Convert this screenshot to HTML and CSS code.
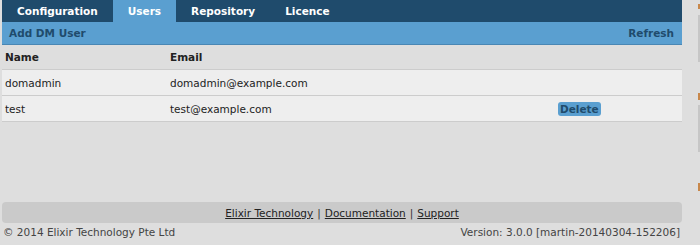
FILE: index.html
```html
<!DOCTYPE html>
<html>
<head>
<meta charset="utf-8">
<link rel="stylesheet" href="styles.css">
</head>
<body>
<div class="page">
  <div class="main">
    <div class="tabs">
      <div class="tab">Configuration</div>
      <div class="tab active">Users</div>
      <div class="tab">Repository</div>
      <div class="tab">Licence</div>
    </div>
    <div class="toolbar">
      <span>Add DM User</span>
      <span>Refresh</span>
    </div>
    <div class="table">
      <div class="row head">
        <div class="c-name">Name</div>
        <div class="c-email">Email</div>
        <div class="c-act"></div>
      </div>
      <div class="row item">
        <div class="c-name">domadmin</div>
        <div class="c-email">domadmin@example.com</div>
        <div class="c-act"></div>
      </div>
      <div class="row item last">
        <div class="c-name">test</div>
        <div class="c-email">test@example.com</div>
        <div class="c-act"><span class="btn">Delete</span></div>
      </div>
    </div>
    <div class="footer">
      <div class="links">
        <a href="#">Elixir Technology</a> | <a href="#">Documentation</a> | <a href="#">Support</a>
      </div>
      <div class="meta">
        <span>© 2014 Elixir Technology Pte Ltd</span>
        <span>Version: 3.0.0 [martin-20140304-152206]</span>
      </div>
    </div>
  </div>
  <div class="side">
    <div class="mark m1"></div>
    <div class="block"></div>
    <div class="mark m2"></div>
    <div class="block"></div>
    <div class="mark m3"></div>
  </div>
</div>
</body>
</html>
```
FILE: styles.css
```css
html, body {
  margin: 0;
  padding: 0;
  background: #dedede;
  font-family: "DejaVu Sans", Verdana, sans-serif;
  font-size: 10.5px;
  color: #222;
  overflow: hidden;
}
.page {
  display: flex;
  padding-left: 2px;
  gap: 16px;
  height: 245px;
}
.main {
  width: 680px;
  flex-shrink: 0;
  display: flex;
  flex-direction: column;
  height: 245px;
}
.tabs {
  display: flex;
  background: #1f4b6c;
  height: 22px;
}
.tab {
  padding: 0 15px;
  color: #fff;
  font-weight: bold;
  line-height: 22px;
}
.tab.active {
  background: #5a9fd0;
}
.toolbar {
  background: #5a9fd0;
  height: 22px;
  border-bottom: 1px solid #4a87b4;
  display: flex;
  justify-content: space-between;
  align-items: center;
  padding: 0 8px 0 7px;
  font-weight: bold;
  color: #1f4b6c;
}
.row {
  display: grid;
  grid-template-columns: 165px 388px 1fr;
  align-items: center;
  padding-left: 3px;
}
.row.head {
  height: 24px;
  font-weight: bold;
}
.row.item {
  height: 25px;
  background: #eeeeee;
  border-top: 1px solid #cccccc;
}
.row.item.last {
  border-bottom: 1px solid #cccccc;
}
.btn {
  display: inline-block;
  background: #5a9fd0;
  color: #1f4b6c;
  font-weight: bold;
  line-height: 14px;
  padding: 0 2px;
  border-radius: 3px;
}
.footer {
  margin-top: auto;
  padding-bottom: 6px;
}
.links {
  background: #cacaca;
  border-radius: 4px;
  height: 21px;
  display: flex;
  align-items: center;
  justify-content: center;
  gap: 4px;
  color: #333;
}
.links a {
  color: #222;
  text-decoration: underline;
}
.meta {
  display: flex;
  justify-content: space-between;
  margin-top: 2px;
  line-height: 14px;
  color: #444;
  padding: 0 2px 0 1px;
}
.side {
  width: 10px;
  flex-shrink: 0;
  display: flex;
  flex-direction: column;
  padding-top: 4px;
}
.mark {
  height: 5px;
  background: #c8874a;
  margin-bottom: 6px;
}
.m2 { height: 7px; margin-top: 31px; margin-bottom: 5px; }
.m3 { height: 8px; margin-top: 31px; }
.block {
  height: 47px;
  background: #c6c6c6;
}
```
